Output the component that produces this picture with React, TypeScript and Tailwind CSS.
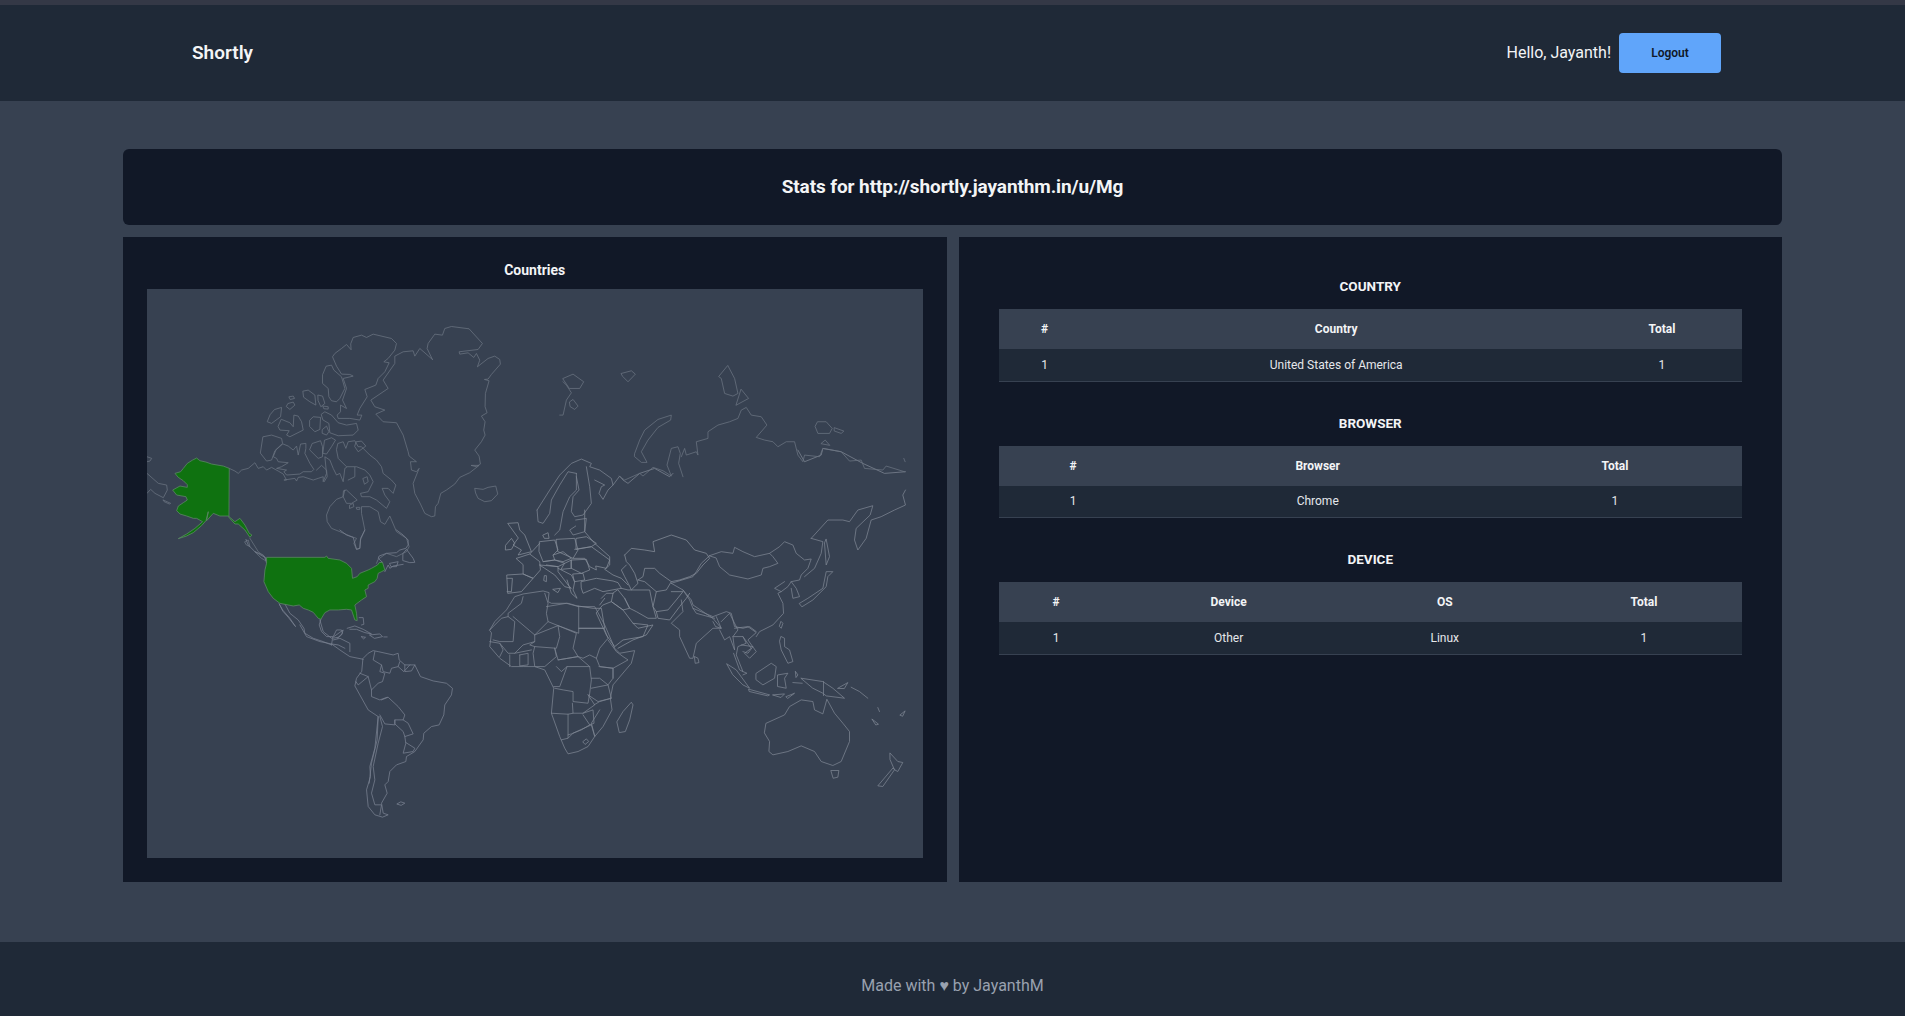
const FONT = "font-['Roboto','Noto_Sans',sans-serif]";

const ALASKA =
  'M298,565 280,558 245,552 228,546 210,542 200,534 188,540 172,550 160,565 152,575 135,580 145,592 160,602 172,614 172,622 150,618 128,630 140,645 168,650 172,660 160,668 145,678 140,692 150,702 170,708 190,715 200,715 218,725 195,745 170,762 145,776 170,768 190,758 215,737 228,722 235,695 230,722 250,700 270,708 295,708 315,725 330,715 345,735 358,760 366,765 360,772 345,750 325,732 315,732 297,712 Z';

const USA =
  'M80,82 255,82 260,78 265,85 300,90 320,100 335,115 338,145 352,140 360,130 385,120 395,115 413,105 418,98 428,97 435,120 425,125 415,130 412,145 405,155 385,165 385,175 375,180 380,200 365,210 345,225 350,250 352,272 345,270 335,240 320,238 295,240 270,240 255,248 243,268 235,265 220,247 205,240 190,235 178,225 160,228 120,220 100,205 85,185 72,155 75,120 80,100 Z';

// traced in crop coordinates, each group has its own top-left corner
const FRAMES: { x: number; y: number; stroke: string; paths: string[] }[] = [
  {
    x: 130,
    y: 280,
    stroke: '#6b7482',
    paths: [
      'M908,238 892,205 895,190 915,162 938,165 945,145 965,139 1018,146 1058,190 1045,208 988,215 990,222 1015,218 1032,232 1040,220 1050,240 1043,260 1075,235 1095,228 1110,238 1112,252 1085,283 1075,297 1064,298 1078,302 1067,340 1066,380 1072,398 1055,408 1066,425 1062,450 1066,465 1055,485 1035,510 1048,528 1052,552 1040,560 1024,556 1048,556 1020,578 990,592 975,612 950,630 933,640 925,670 917,680 915,708 905,710 885,700 872,672 855,640 850,610 868,565 860,575 845,570 842,545 860,545 838,528 835,515 820,465 800,428 760,425 738,402 765,390 735,380 723,360 775,325 760,300 795,250 795,228 820,215 850,212 855,228 870,205 908,238',
      'M663,190 670,172 695,165 710,172 730,162 785,175 800,190 795,210 775,235 762,245 778,248 765,275 745,295 738,315 705,328 712,350 690,385 682,405 696,405 690,420 660,415 625,415 622,405 632,395 632,375 650,385 638,360 650,325 640,295 670,288 660,283 635,282 620,258 608,230 615,220 635,205 650,193 663,208 Z',
      'M590,258 605,255 612,270 635,290 645,325 630,355 620,365 605,362 597,350 595,325 578,310 578,285 Z',
      'M520,333 535,330 555,345 558,375 540,365 522,352 Z',
      'M565,345 578,348 585,370 573,380 565,362 Z',
      'M580,378 595,380 595,387 583,386 Z',
      'M478,350 490,348 494,355 482,358 Z',
      'M475,370 490,366 495,375 480,388 470,380 Z',
      'M435,388 455,382 452,410 425,430 412,425 420,405 Z',
      'M455,418 480,428 490,440 492,405 505,408 515,425 520,450 480,470 470,465 478,452 450,450 445,440 Z',
      'M540,420 550,410 572,412 570,448 555,455 540,440 Z',
      'M575,402 585,395 605,405 625,428 650,435 680,430 685,450 670,465 625,467 600,458 597,430 580,420 Z',
      'M578,448 590,438 597,455 590,465 578,460 Z',
      'M400,470 425,465 455,475 458,490 435,512 425,540 410,543 392,520 Z',
      'M460,492 475,498 490,510 500,498 505,525 512,492 528,490 528,505 525,520 540,550 552,568 545,575 520,575 510,582 470,585 462,575 470,570 440,565 455,560 475,548 445,545 440,535 430,530 438,510 Z',
      'M548,490 572,482 578,500 578,530 565,535 540,510 Z',
      'M585,480 605,473 617,480 605,500 590,522 580,520 Z',
      'M625,490 640,485 648,505 655,485 675,482 685,500 695,500 720,525 740,540 755,560 760,580 785,600 798,615 790,640 775,625 757,625 765,645 780,665 770,685 740,660 720,650 695,650 692,640 715,635 730,605 720,585 705,570 680,560 650,560 625,535 620,510 Z',
      'M680,485 695,483 708,498 685,515 675,500 Z',
      'M298,565 315,573 325,580 335,570 355,565 375,548 385,565 400,560 410,570 425,562 445,573 460,582 470,600 462,600 495,595 500,603 505,592 520,590 550,600 565,595 580,590 580,605 590,580 585,530 600,540 610,565 620,585 630,580 640,605 645,565 650,562',
      'M560,570 575,556 590,570 592,590 583,605',
      'M675,562 675,590 655,600',
      'M645,630 640,650 620,658 600,680 590,705 592,725 605,745 630,755 665,770 680,775 672,790 680,808 690,805 692,780 705,750 695,700 695,680 720,680 745,695 752,725 765,733 780,708 800,755 830,775 838,800 830,815 800,830 770,820 745,838 740,850',
      'M642,632 650,630 682,660 665,670 650,670 640,650 Z',
      'M660,675 670,670 672,680 660,685 Z',
      'M680,682 690,682 690,688 682,688 Z',
      'M700,595 712,590 715,605 705,612 Z',
      'M1036,625 1060,628 1075,622 1098,618 1104,642 1085,662 1065,665 1045,655 1038,640 Z',
      'M51,580 85,610 110,615 112,630 100,653 75,640 62,628 51,640',
      'M51,530 65,535 60,543 51,545',
      'M100,660 122,670 118,672 103,665 Z',
      'M345,785 355,780 360,800 350,795 Z',
      'M375,815 400,825 412,845 395,835 Z',
      'M360,775 385,815 410,835 415,845',
    ],
  },
  {
    x: 240,
    y: 530,
    stroke: '#7a8291',
    paths: [
      'M118,222 128,240 150,265 167,290 145,262 130,245 Z',
      'M135,222 150,250 175,270 192,295 195,310 220,325 250,335 275,345',
      'M243,268 238,285 245,305 260,320 280,320 290,300 305,300 308,310 295,322 278,325 275,345',
      'M322,295 345,288 370,298 395,312 375,308 350,298 330,298',
      'M390,315 420,312 428,320 405,325 Z',
      'M365,320 377,322 372,326 Z',
      'M432,321 442,321',
      'M358,263 370,263 372,283 365,285',
      'M428,97 415,85 418,78 440,70 470,68 480,60 498,55 505,45 505,30 490,15 470,0',
      'M490,70 500,58 520,85 525,97 510,98 490,92 Z',
      'M435,125 445,105 450,115 460,108 478,105 490,103',
      'M450,100 475,95 470,110 455,110 Z',
      'M300,0 320,15 340,22 350,58 360,55 362,25 375,0',
      'M18,28 25,45 45,65 75,82 80,100',
    ],
  },
  {
    x: 300,
    y: 620,
    stroke: '#7a8291',
    paths: [
      'M190,115 205,100 220,92 235,95 280,105 295,100 298,120 315,135 345,135 362,170 400,183 440,190 458,205 455,225 435,255 432,285 418,315 395,320 372,340 370,360 345,395 320,410 318,425 290,435 270,455 265,485 255,495 262,520 245,550 250,580 265,585 248,592 225,585 205,560 200,510 212,470 210,440 225,385 235,290 205,270 180,225 165,198 170,175 185,155 Z',
      'M225,95 220,120 245,135 240,155 255,160 248,185 235,190 215,210 205,170 180,160',
      'M245,135 250,155 270,160 275,145 295,140 300,125',
      'M295,140 312,155 330,135',
      'M315,135 315,155 335,153 345,135',
      'M168,185 175,195 205,170',
      'M215,210 215,230 240,240 262,232',
      'M245,240 265,232 295,260 315,285 310,300 285,300 285,315 255,312 240,285',
      'M285,300 285,312 310,335 315,350 340,342 325,310 310,300',
      'M240,290 248,320 235,370 220,440 225,480 215,520 225,555 245,555 240,585',
      'M315,350 318,370 310,400 340,395 345,385 318,368',
      'M235,290 232,360 215,430 208,490',
      'M292,552 303,546 315,550 305,556 Z',
      'M0,15 20,50 60,65 95,72 120,90 150,110 190,118',
      'M60,0 70,35 95,55 130,30 125,45 112,55',
      'M100,60 120,55 150,70 150,95',
      'M95,72 115,75 135,85',
    ],
  },
  {
    x: 480,
    y: 440,
    stroke: '#7d8593',
    paths: [
      // Scandinavia
      'M172,210 210,150 240,105 275,70 305,57 335,70 330,80 360,90 395,115 400,135 385,150 370,178 358,160 365,140 375,135 345,120',
      'M172,210 175,245 190,250 210,220 215,180 240,135 265,95 290,100',
      'M290,100 290,150 270,170 250,215 240,270 225,285',
      'M320,80 330,140 335,190 310,225 285,230 275,215 280,170 298,150 290,110',
      'M288,240 320,235 315,275 280,285 270,270 288,258',
      'M400,135 420,108 430,120 445,130 480,100 525,85 570,110 580,100',
      // Africa
      'M30,570 45,545 80,510 105,470 130,462 190,453 208,458 205,485 215,490 265,490 300,500 345,500 375,555 405,625 420,640 465,632 455,670 400,735 392,775 397,810 370,860 345,890 325,920 295,935 265,942 255,925 240,890 215,820 222,745 195,690 165,680 130,680 95,680 60,655 30,620 35,580 Z',
      'M130,470 125,490 85,520 85,530',
      'M195,460 205,490 200,520 205,545 165,585 100,530',
      'M30,570 65,535 85,530 105,545 100,605 60,605 40,600',
      'M165,585 165,605 130,615 105,640 85,640 60,610',
      'M200,500 260,490 297,500 297,580 235,557 205,545',
      'M165,585 235,557 240,590 230,625 165,620 150,615 165,605',
      'M235,557 290,580 280,625 295,650 265,655 235,660 225,625',
      'M297,565 373,565 385,595 360,625 350,655 330,645 310,655 295,650',
      'M385,600 410,635 430,650 445,660 400,685 360,680 350,655',
      'M400,685 400,715',
      'M225,625 230,650 195,680 165,680 160,640 165,620',
      'M30,605 60,610 70,630 60,650',
      'M90,645 90,680',
      'M120,645 120,678 145,675 145,640 120,645',
      'M105,640 155,630',
      'M235,660 295,650 330,680 262,680 245,695 230,680',
      'M222,740 240,740 262,680',
      'M330,680 335,720 330,760 325,790 280,785 280,755 250,750 225,745',
      'M358,680 400,685 400,715 385,735 360,715 335,715',
      'M335,745 385,735 395,775 355,785 325,765',
      'M215,820 265,823 280,820 278,790',
      'M280,820 310,820 345,795 325,765',
      'M265,823 265,895 245,900',
      'M265,885 275,882 305,870 330,855 310,825',
      'M310,820 340,810 343,850 330,855',
      'M343,795 360,785 395,775 M360,810 335,850 345,888',
      'M265,895 280,880 335,855 345,890',
      'M310,905 320,897 327,905 317,913 Z',
      'M412,845 430,815 455,787 460,795 450,840 437,875 420,878 Z',
      // Asia
      'M690,347 725,335 760,340 765,322 790,335 825,350 870,340 880,350 895,370 870,380 850,385 845,405 805,417 750,405 720,380 710,355 Z',
      'M870,340 900,320 915,305 940,315 950,340 975,360 995,357 985,385 965,405 960,420 935,425 925,440 905,455 885,445 915,425',
      'M935,425 950,445 960,470 940,475 935,445',
      'M905,455 895,460 910,490 912,520 880,555 840,575 830,590',
      'M830,575 810,560 790,565 765,560 755,520 740,515 700,530 640,505 630,480 610,450 575,430',
      'M575,430 640,410 650,395 665,370 690,347',
      'M610,450 635,480 640,495 700,535 725,565 700,565 650,610 640,655 630,655 600,590 600,570 575,550 610,515 605,480',
      'M640,505 650,520 705,535',
      'M710,530 725,565 708,560 700,545',
      'M725,545 750,520 760,540 775,570 760,590 765,630 750,590 735,600 720,570',
      'M760,590 790,590 800,610 775,620 770,645 790,695 780,690 762,640',
      'M765,565 805,560 830,578 805,600 830,635 810,655 795,640 815,625 790,590',
      'M785,615 820,620 805,640 790,635',
      'M790,695 802,700 790,705',
      'M995,295 1045,240 1090,240 1110,245 1135,210 1180,197 1172,225 1130,265 1125,300 1135,330 1160,295 1175,240 1205,230 1245,210 1278,195 1270,165 1278,150',
      'M995,295 1030,305 1025,340 1005,385 975,410',
      'M1040,298 1050,350 1040,375 1035,310 Z',
      'M960,490 985,475 1030,445 1040,395 1060,395 1045,410 1040,440 1000,480 968,500 Z',
      'M905,545 910,550 905,565 900,560 Z',
      'M645,650 655,655 658,668 648,670 Z',
      'M955,30 975,65 1025,45 1030,25 1085,35 1150,70 1215,100 1278,95',
      'M905,590 915,595 915,620 930,630 940,665 925,670 905,630 900,605 Z',
      'M830,700 875,670 890,680 885,715 850,735 830,720 Z',
      'M742,672 770,690 810,745 790,735 760,705 Z',
      'M808,748 870,765 865,768 810,755 Z',
      'M895,705 925,700 915,715 920,745 895,740 Z',
      'M965,715 1030,725 1060,745 1095,775 1040,768 1030,760 1000,745 Z',
      'M1032,725 1032,767',
      'M880,765 915,762 905,772 Z',
      'M920,770 945,760 925,775 Z',
      'M940,728 968,730',
      'M948,695 955,705 950,712 Z',
      'M1075,745 1105,728 1095,745 Z',
      'M1115,742 1140,755 1165,775',
      'M1232,940 1255,965 1270,968 1255,995 1245,990 1232,960 Z',
      'M1245,990 1210,1040 1195,1038 1240,985 Z',
      'M1055,992 1078,992 1075,1012 1062,1015 Z',
      'M860,850 915,825 930,800 965,780 1000,785 1005,810 1030,822 1042,778 1065,820 1090,850 1110,875 1110,905 1085,965 1060,977 1025,965 1005,935 965,918 925,935 880,945 868,935 870,905 855,880 Z',
      'M1178,838 1197,853 1190,855 Z',
      'M1262,825 1277,813 1270,828 Z',
      'M1195,803 1200,815',
    ],
  },
  {
    x: 490,
    y: 510,
    stroke: '#858d9a',
    paths: [
      // Europe and the Middle East
      'M55,40 85,38 90,60 105,75 125,125 85,135 95,120 70,105 85,85 Z',
      'M48,105 65,85 75,100 65,118 48,120 Z',
      'M52,195 100,192 130,205 95,245 55,250 Z',
      'M52,205 68,205 65,245 52,245',
      'M80,145 120,132 150,155 152,180 130,205 100,192 100,165 Z',
      'M150,95 195,90 205,120 190,135 195,150 160,155 148,125 Z',
      'M120,132 150,100',
      'M160,75 175,68 178,85 165,85 Z',
      'M200,88 255,85 265,120 250,145 205,125 Z',
      'M190,135 220,125 245,145 220,155 195,150',
      'M160,155 195,150 225,160 205,170 170,165',
      'M150,165 205,170 205,185 235,225 245,235 225,230 195,195 165,175 Z',
      'M165,197 170,197 170,215 163,212 Z',
      'M190,238 212,235 205,247 Z',
      'M205,175 245,195 255,215 250,240 262,265 245,250 232,210',
      'M245,150 290,148 300,180 275,190 245,175 Z',
      'M225,160 245,150 245,175 215,178 Z',
      'M250,192 280,190 285,210 255,215 Z',
      'M255,118 305,110 360,150 350,175 318,168 320,180 300,170 285,145 250,145',
      'M260,85 290,80 320,100 305,110 260,118 Z',
      'M285,0 285,65 315,100 360,140 360,165 345,178 370,195 395,205 415,225',
      'M275,215 320,205 370,213 385,218 395,235 340,245 315,235 280,250 275,235 Z',
      'M405,135 410,155 420,165 435,190 445,220 425,240 418,225 405,200 395,180 410,165',
      'M405,135 425,115 465,120 495,125 490,95 545,75 590,90 615,120 650,130 660,145 640,165 620,190 600,200 570,210 545,215 510,190 495,175 465,175 460,200 445,210',
      'M445,210 465,215 500,245 530,240 545,215',
      'M500,245 490,290 500,305 535,300 560,270 580,245 545,245',
      'M500,305 505,325 540,330 570,290 590,265 600,250',
      'M395,235 415,240 445,240 480,240 490,290 500,325 475,325 440,305 420,295 405,265',
      'M385,240 405,265 420,295 400,300 365,275 370,250 Z',
      'M340,285 365,275 400,300 430,340 475,345 460,380 400,390 375,410 350,375 320,310 Z',
      'M265,288 310,295 335,295 345,355 268,355',
      'M335,265 350,250 370,250',
      'M330,285 345,265',
      'M430,340 445,355 490,345 470,375 430,390 385,415',
    ],
  },
  {
    x: 560,
    y: 350,
    stroke: '#6b7482',
    paths: [
      'M0,195 10,195 20,150 35,128 20,105 10,95',
      'M10,85 40,72 72,95 60,115 30,115 Z',
      'M225,310 240,270 255,240 295,208 335,195 333,210 295,232 265,270 245,305 262,337 245,337 225,320 Z',
      'M178,378 195,390 240,370 250,378 280,352 310,362 335,378 322,345 335,295 355,290 362,310 357,340 370,380',
      'M365,320 375,295 380,315 410,305 415,315 410,275 445,265 445,245 475,225 510,215 535,205 545,180 560,172 575,195 605,200 622,225 590,262 615,270 640,275 655,290 680,275 705,275 715,315 730,335 735,315 780,320 790,295 845,305 870,333 905,330 915,355 970,360 980,348 1035,365',
      'M505,47 525,85 535,130 520,138 495,130 485,85 478,80 Z',
      'M545,118 567,145 530,165 Z',
      'M775,215 800,215 818,235 810,250 775,250 767,230 Z',
      'M825,233 853,243 845,250 825,243 Z',
      'M785,280 797,270 810,285 Z',
      'M185,70 215,62 227,72 205,95 190,80 Z',
      'M30,155 40,148 55,168 45,178 32,170 Z',
      'M1033,325 1037,335',
    ],
  },
];

function WorldMap() {
  return (
    <svg viewBox="147 289 776 569" className="block h-[569px] w-full">
      <g fill="none" strokeWidth="0.75" strokeLinejoin="round" strokeLinecap="round">
        {FRAMES.map(frame => (
          <g key={frame.x} stroke={frame.stroke} transform={`translate(${frame.x} ${frame.y}) scale(0.3333)`}>
            {frame.paths.map(d => (
              <path key={d} d={d} vectorEffect="non-scaling-stroke" />
            ))}
          </g>
        ))}
      </g>
      <g fill="#0f7210" stroke="#5f8a68" strokeWidth="0.75" strokeLinejoin="round">
        <path d={ALASKA} transform="translate(130 280) scale(0.3333)" vectorEffect="non-scaling-stroke" />
        <path d={USA} transform="translate(240 530) scale(0.3333)" vectorEffect="non-scaling-stroke" />
      </g>
    </svg>
  );
}

interface StatTable {
  title: string;
  columns: { label: string; width: string }[];
  row: string[];
}

const TABLES: StatTable[] = [
  {
    title: 'COUNTRY',
    columns: [
      { label: '#', width: 'w-[92px]' },
      { label: 'Country', width: 'w-[491px]' },
      { label: 'Total', width: 'w-[160px]' },
    ],
    row: ['1', 'United States of America', '1'],
  },
  {
    title: 'BROWSER',
    columns: [
      { label: '#', width: 'w-[149px]' },
      { label: 'Browser', width: 'w-[340px]' },
      { label: 'Total', width: 'w-[254px]' },
    ],
    row: ['1', 'Chrome', '1'],
  },
  {
    title: 'DEVICE',
    columns: [
      { label: '#', width: 'w-[115px]' },
      { label: 'Device', width: 'w-[230px]' },
      { label: 'OS', width: 'w-[202px]' },
      { label: 'Total', width: 'w-[196px]' },
    ],
    row: ['1', 'Other', 'Linux', '1'],
  },
];

export default function App() {
  return (
    <div className={`${FONT} flex min-h-screen flex-col bg-[#374151] text-gray-100`}>
      <header className="h-[101px] border-t-[5px] border-[#343846] bg-[#1f2937]">
        <div className="flex h-24 items-center justify-between pl-[192px] pr-[184px]">
          <span className="text-[19px] font-semibold">Shortly</span>
          <div className="flex items-center gap-2">
            <span className="text-base">Hello, Jayanth!</span>
            <button className="h-10 w-[102px] rounded-sm bg-[#60a5fa] text-xs font-semibold text-gray-900">
              Logout
            </button>
          </div>
        </div>
      </header>

      <main className="flex flex-1 flex-col gap-3 px-[123px] pb-[60px] pt-12">
        <div className="flex h-[76px] items-center justify-center rounded-md bg-[#111827]">
          <h1 className="text-[19px] font-bold tracking-[-0.1px]">Stats for http://shortly.jayanthm.in/u/Mg</h1>
        </div>
        <div className="grid h-[645px] grid-cols-2 gap-3">
          <section className="bg-[#111827] px-6 pt-6">
            <h2 className="mb-[10px] text-center text-sm font-bold leading-[18px]">Countries</h2>
            <div className="overflow-hidden bg-[#374151]">
              <WorldMap />
            </div>
          </section>
          <section className="flex flex-col gap-[32px] bg-[#111827] px-10 pt-10">
            {TABLES.map(table => (
              <div key={table.title}>
                <h3 className="mb-[14px] text-center text-[13.5px] font-bold leading-[18px]">{table.title}</h3>
                <table className="w-full table-fixed text-center text-xs">
                  <thead>
                    <tr className="h-10 bg-[#374151]">
                      {table.columns.map(col => (
                        <th key={col.label} className={`${col.width} font-bold`}>{col.label}</th>
                      ))}
                    </tr>
                  </thead>
                  <tbody>
                    <tr className="h-[32px] border-b border-[#374151] bg-[#1f2937]">
                      {table.row.map((cell, i) => (
                        <td key={i} className="text-gray-200">{cell}</td>
                      ))}
                    </tr>
                  </tbody>
                </table>
              </div>
            ))}
          </section>
        </div>
      </main>

      <footer className="flex h-[74px] items-center justify-center bg-[#1f2937] pt-[14px] text-base text-gray-400">
        Made with ♥ by JayanthM
      </footer>
    </div>
  );
}
